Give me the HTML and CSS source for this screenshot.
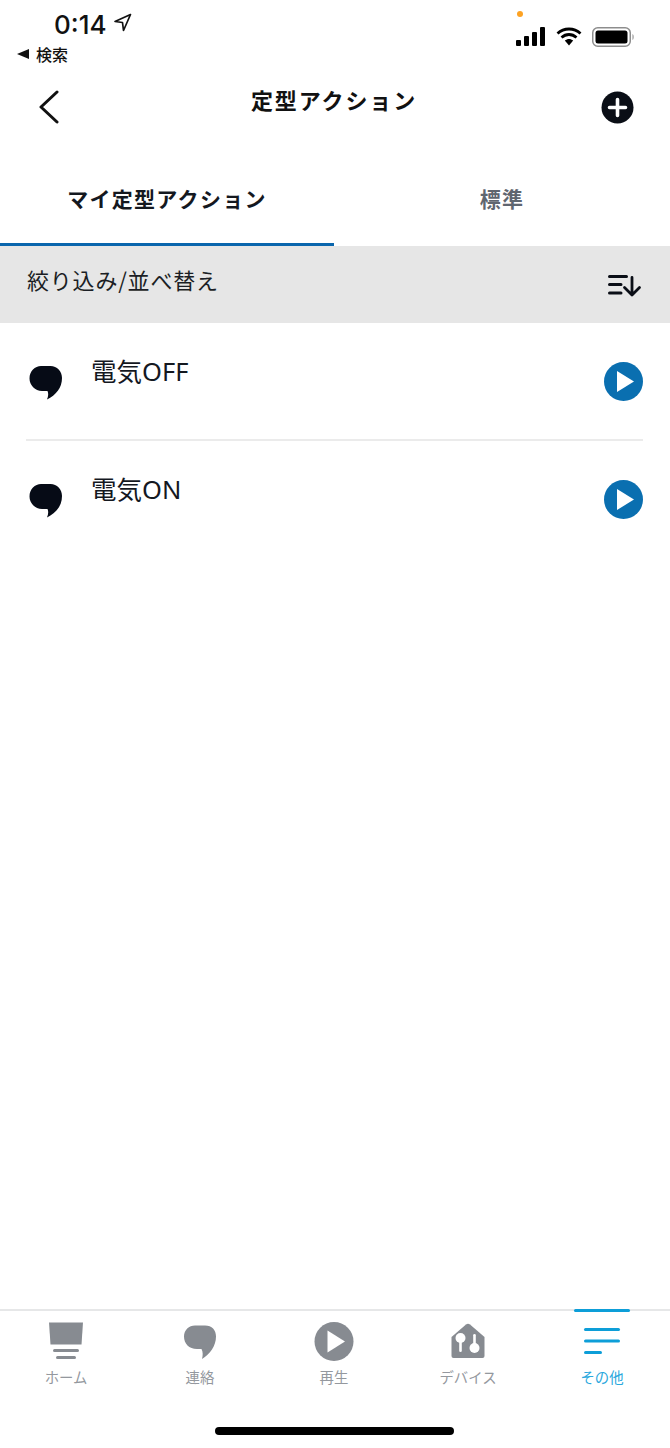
FILE: index.html
```html
<!DOCTYPE html>
<html lang="ja">
<head>
<meta charset="utf-8">
<title>定型アクション</title>
<link rel="stylesheet" href="styles.css">
</head>
<body>
<div class="app">
  <div class="status">
    <div class="status-left">
      <div class="time-row">
        <span class="time">0:14</span>
        <svg class="loc" width="19" height="19" viewBox="0 0 19 19"><path d="M17.500 1.500 L2 8.500 L9.500 9.500 L10.500 17.500 Z" fill="none" stroke="#111" stroke-width="1.700" stroke-linejoin="round"/></svg>
      </div>
      <div class="back-app"><span class="tri"></span>検索</div>
    </div>
    <span class="dot"></span>
    <div class="status-right">
      <svg width="30" height="19" viewBox="0 0 30 19"><g fill="#000"><rect x="0" y="13" width="5" height="6" rx="1"/><rect x="8" y="9" width="5" height="10" rx="1"/><rect x="16" y="5" width="5" height="14" rx="1"/><rect x="24" y="0" width="5" height="19" rx="1"/></g></svg>
      <svg width="26" height="19" viewBox="0 0 26 19"><g fill="none" stroke="#000" stroke-width="2.800"><path d="M1.500 6.500 C8 .5 18 .5 24.500 6.500"/><path d="M5.500 10.500 C10 6.500 16 6.500 20.500 10.500"/></g><path d="M8.800 13.600 C11.500 11.300 14.500 11.300 17.200 13.600 L13 18.500 Z" fill="#000"/></svg>
      <svg width="43" height="20" viewBox="0 0 43 20"><rect x=".75" y=".75" width="37.500" height="18.500" rx="5" fill="none" stroke="#8d8d8d" stroke-width="1.500"/><rect x="3.500" y="3.500" width="32" height="13" rx="2.500" fill="#000"/><path d="M40.500 7 C42 7.500 42 12.500 40.500 13 Z" fill="#8d8d8d"/></svg>
    </div>
  </div>

  <header class="nav">
    <svg class="nav-back" width="22" height="34" viewBox="0 0 22 34"><path d="M19 2 L3 17 L19 32" fill="none" stroke="#111" stroke-width="3" stroke-linecap="round" stroke-linejoin="round"/></svg>
    <h1 class="nav-title">定型アクション</h1>
    <svg class="nav-add" width="33" height="33" viewBox="0 0 33 33"><circle cx="16.500" cy="16.500" r="16" fill="#0a0e16"/><path d="M16.500 8.500 V24.500 M8.500 16.500 H24.500" stroke="#fff" stroke-width="3.600" stroke-linecap="round"/></svg>
  </header>

  <nav class="tabs">
    <div class="tab tab-active">マイ定型アクション</div>
    <div class="tab">標準</div>
  </nav>

  <div class="filter">
    <span class="filter-label">絞り込み/並べ替え</span>
    <svg width="34" height="24" viewBox="0 0 34 24"><g fill="none" stroke="#0a0e16" stroke-linecap="round" stroke-linejoin="round"><path stroke-width="3" d="M1.500 3.500 H18.500 M1.500 11.500 H13 M1.500 20 H13"/><path stroke-width="2.800" d="M24 4.500 V22 M16.500 14.500 L24 22 L31.500 14.500"/></g></svg>
  </div>

  <main class="list">
    <div class="row">
      <svg class="bubble" width="34" height="36" viewBox="0 0 34 36"><path d="M12 1 H21.500 C28 1 33 6 33 13 C33 23 27 30 18 34.500 C19.500 31 19.500 28 18.500 26 H13 C6 26 .5 20 .5 13.500 C.5 6 6 1 12 1 Z" fill="#060b16"/></svg>
      <span class="row-label">電気OFF</span>
      <svg class="play" width="39" height="39" viewBox="0 0 39 39"><circle cx="19.500" cy="19.500" r="19.500" fill="#0a6fb0"/><path d="M13 9 L30 19.500 L13 30 Z" fill="#fff"/></svg>
    </div>
    <div class="row">
      <svg class="bubble" width="34" height="36" viewBox="0 0 34 36"><path d="M12 1 H21.500 C28 1 33 6 33 13 C33 23 27 30 18 34.500 C19.500 31 19.500 28 18.500 26 H13 C6 26 .5 20 .5 13.500 C.5 6 6 1 12 1 Z" fill="#060b16"/></svg>
      <span class="row-label">電気ON</span>
      <svg class="play" width="39" height="39" viewBox="0 0 39 39"><circle cx="19.500" cy="19.500" r="19.500" fill="#0a6fb0"/><path d="M13 9 L30 19.500 L13 30 Z" fill="#fff"/></svg>
    </div>
  </main>

  <footer class="tabbar">
    <div class="tb-item">
      <svg class="tb-icon" width="40" height="40" viewBox="0 0 40 40"><g fill="#878b91"><path d="M3 1.500 H37 L35.500 23.500 H4.500 Z"/><rect x="7" y="28" width="26" height="3" rx="1.500"/><rect x="10" y="35" width="20" height="3" rx="1.500"/></g></svg>
      <span class="tb-label">ホーム</span>
    </div>
    <div class="tb-item">
      <svg class="tb-icon" width="40" height="40" viewBox="0 0 40 40"><path d="M15 4.500 H25 C32 4.500 36 9 36 15.500 C36 25 30 33 22 38 C23 34 23 31 21.500 28 H17 C9 28 4 22.500 4 15.500 C4 9 9 4.500 15 4.500 Z" fill="#878b91"/></svg>
      <span class="tb-label">連絡</span>
    </div>
    <div class="tb-item">
      <svg class="tb-icon" width="40" height="40" viewBox="0 0 40 40"><circle cx="20" cy="20.500" r="19.500" fill="#878b91"/><path d="M13.500 9.500 L31 20.500 L13.500 31.500 Z" fill="#fff"/></svg>
      <span class="tb-label">再生</span>
    </div>
    <div class="tb-item">
      <svg class="tb-icon" width="40" height="40" viewBox="0 0 40 40"><path d="M3.500 16 L18 3.500 Q20 2 22 3.500 L36.500 16 V35 Q36.500 37 34.500 37 H5.500 Q3.500 37 3.500 35 Z" fill="#878b91"/><circle cx="12.500" cy="17" r="5" fill="#fff"/><rect x="11.200" y="18" width="2.600" height="13" rx="1.300" fill="#fff"/><circle cx="26.500" cy="27" r="5" fill="#fff"/><rect x="25.200" y="13" width="2.600" height="13" rx="1.300" fill="#fff"/></svg>
      <span class="tb-label">デバイス</span>
    </div>
    <div class="tb-item tb-active">
      <svg class="tb-icon" width="40" height="40" viewBox="0 0 40 40"><g fill="#0d9ed8"><rect x="2" y="7" width="36" height="3" rx="1.500"/><rect x="2" y="18.500" width="36" height="3" rx="1.500"/><rect x="2" y="30" width="18" height="3" rx="1.500"/></g></svg>
      <span class="tb-label">その他</span>
    </div>
  </footer>
  <div class="home-bar"><span class="home-ind"></span></div>
</div>
</body>
</html>
```
FILE: styles.css
```css
* { box-sizing: border-box; }
html, body { margin: 0; padding: 0; }
body {
  background: #fff;
  color: #111;
  font-family: "Noto Sans", "Noto Sans CJK JP", "Liberation Sans", sans-serif;
}
.app {
  width: 670px;
  height: 1448px;
  display: flex;
  flex-direction: column;
  overflow: hidden;
}
.status {
  height: 80px;
  flex: none;
  display: flex;
  justify-content: space-between;
  padding: 8px 35px 0 17px;
  position: relative;
}
.status-left { display: flex; flex-direction: column; }
.time-row { display: flex; align-items: center; gap: 6px; padding-left: 37px; height: 32px; }
.time { font-family: Inter, "Liberation Sans", sans-serif; font-size: 26px; font-weight: 500; color: #111; }
.loc { margin-top: -3px; }
.back-app {
  display: flex;
  align-items: center;
  gap: 7px;
  font-size: 16px;
  font-weight: 500;
  line-height: 20px;
  margin-top: 4px;
  font-family: "Noto Sans CJK JP", sans-serif;
}
.tri {
  width: 0;
  height: 0;
  border-style: solid;
  border-width: 5px 12px 5px 0;
  border-color: transparent #111 transparent transparent;
}
.dot {
  position: absolute;
  left: 517px;
  top: 11px;
  width: 6px;
  height: 6px;
  border-radius: 50%;
  background: #fda223;
}
.status-right { display: flex; align-items: center; gap: 10px; height: 19px; margin-top: 19px; }
.nav {
  height: 47px;
  flex: none;
  display: flex;
  align-items: center;
  justify-content: space-between;
  padding: 7px 36px 0 38px;
  position: relative;
}
.nav-title {
  position: absolute;
  left: 0;
  right: 0;
  top: 5px;
  margin: 0;
  padding-right: 2px;
  text-align: center;
  font-size: 22px;
  line-height: 28px;
  font-weight: 700;
  letter-spacing: 1.900px;
  font-family: "Noto Sans CJK JP", sans-serif;
}
.tabs {
  height: 119px;
  flex: none;
  display: flex;
}
.tab {
  flex: 1;
  display: flex;
  align-items: center;
  justify-content: center;
  padding-top: 25px;
  font-size: 21px;
  font-weight: 700;
  letter-spacing: 1.300px;
  color: #5f6670;
  border-bottom: 3px solid transparent;
  font-family: "Noto Sans CJK JP", sans-serif;
}
.tab-active { flex: 0 0 334px; color: #14181f; border-bottom-color: #0a66ad; }
.filter {
  height: 77px;
  flex: none;
  background: #e6e6e6;
  display: flex;
  justify-content: space-between;
  align-items: center;
  padding: 0 28px 0 27px;
}
.filter-label {
  font-size: 22px;
  line-height: 28px;
  letter-spacing: .8px;
  margin-top: -12px;
  color: #1b1e24;
  font-family: "Noto Sans CJK JP", sans-serif;
}
.list { flex: 1; padding: 0 27px 0 26px; }
.row {
  height: 118px;
  display: flex;
  align-items: flex-start;
  border-bottom: 2px solid #ebebeb;
}
.row:last-child { border-bottom: 0; }
.bubble { margin: 42px 0 0 3px; flex: none; }
.row-label {
  flex: 1;
  margin: 31px 0 0 28px;
  font-size: 25.500px;
  line-height: 34px;
  color: #14181f;
  font-family: "Noto Sans", "Noto Sans CJK JP", sans-serif;
}
.play { margin-top: 39px; flex: none; }
.tabbar {
  height: 118px;
  flex: none;
  display: grid;
  grid-template-columns: repeat(5, 134px);
  margin-left: -1px;
  border-top: 2px solid #e6e7e8;
  padding-top: 10px;
}
.tb-item {
  display: flex;
  flex-direction: column;
  align-items: center;
  position: relative;
}
.tb-label {
  font-size: 14.400px;
  line-height: 20px;
  margin-top: 6px;
  color: #94989e;
  font-family: "Noto Sans CJK JP", sans-serif;
}
.tb-active .tb-label { color: #2aa8dd; }
.tb-active::before {
  content: "";
  position: absolute;
  top: -12px;
  left: 39px;
  width: 56px;
  height: 3px;
  border-radius: 2px;
  background: #0d9ed8;
}
.home-bar {
  height: 21px;
  flex: none;
  display: flex;
  justify-content: center;
  padding-right: 2px;
}
.home-ind { width: 239px; height: 8px; border-radius: 4px; background: #000; }
```
